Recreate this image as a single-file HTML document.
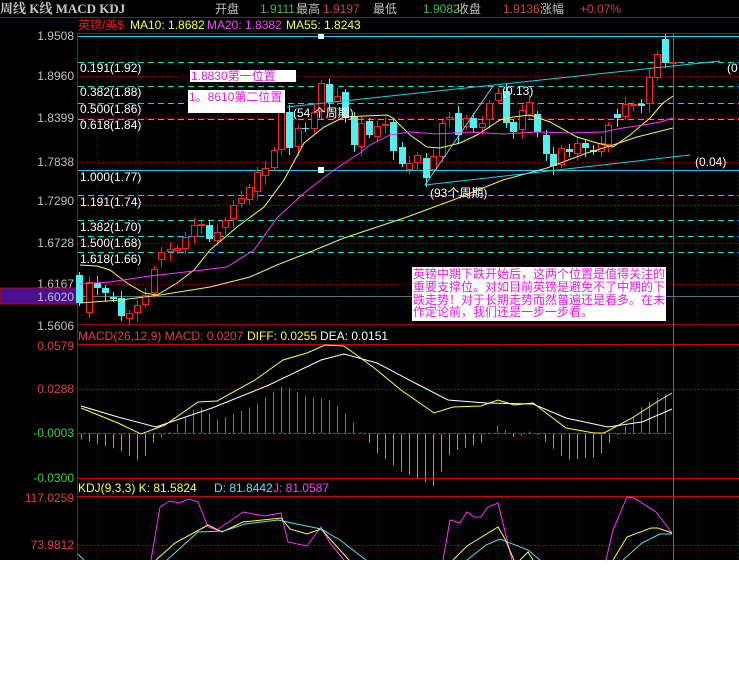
<!DOCTYPE html>
<html><head><meta charset="utf-8">
<style>
html,body{margin:0;padding:0;background:#fff;}
#w{position:relative;width:739px;height:684px;overflow:hidden;background:#fff;}
svg{position:absolute;left:0;top:0;}
text{font-family:"Liberation Sans","Noto Sans CJK SC",sans-serif;}
</style></head><body><div id="w">
<svg id="s" width="739" height="684" xmlns="http://www.w3.org/2000/svg">
<rect x="0" y="0" width="739" height="560" fill="#000"/>
<text x="0" y="13" font-size="13" font-weight="bold" fill="#c8c8c8" style="font-family:'Liberation Serif','Noto Serif CJK SC',serif">周线 K线 MACD KDJ</text>
<g font-size="12">
<text x="215" y="13" fill="#c0c0c0">开盘</text>
<text x="260" y="13" fill="#40c040">1.9111</text>
<text x="296" y="13" fill="#c0c0c0">最高</text>
<text x="323" y="13" fill="#d04040">1.9197</text>
<text x="373" y="13" fill="#c0c0c0">最低</text>
<text x="423" y="13" fill="#40c040">1.9082</text>
<text x="457" y="13" fill="#c0c0c0">收盘</text>
<text x="503" y="13" fill="#d04040">1.9136</text>
<text x="540" y="13" fill="#c0c0c0">涨幅</text>
<text x="580" y="13" fill="#d04040">+0.07%</text>
</g>
<line x1="0" y1="17.5" x2="739" y2="17.5" stroke="#b00000"/>
<g font-size="12">
<text x="78" y="29" fill="#e02020">英镑/美$</text>
<text x="130" y="29" fill="#ffff40">MA10: 1.8682</text>
<text x="207" y="29" fill="#ff40ff">MA20: 1.8382</text>
<text x="286" y="29" fill="#ffff40">MA55: 1.8243</text>
</g>
<line x1="77" y1="33.5" x2="739" y2="33.5" stroke="#d00000"/>
<line x1="77.5" y1="33" x2="77.5" y2="560" stroke="#c00000"/>
<g font-size="12" fill="#c0c0c0" text-anchor="end">
<text x="74" y="40">1.9508</text>
<text x="74" y="80">1.8960</text>
<text x="74" y="122">1.8399</text>
<text x="74" y="166">1.7838</text>
<text x="74" y="205">1.7290</text>
<text x="74" y="247">1.6728</text>
<text x="74" y="288">1.6167</text>
<text x="74" y="330">1.5606</text>
</g>
<rect x="0" y="288" width="77" height="16" fill="#4a1090" stroke="#c00000"/>
<text x="74" y="301" font-size="12" fill="#c0c0c0" text-anchor="end">1.6020</text>
<g id="grid" stroke="#a00000" stroke-dasharray="1,3"></g>
<g stroke="#20d0e0" stroke-width="1">
<line x1="78" y1="36.5" x2="739" y2="36.5"/>
<line x1="78" y1="170.5" x2="739" y2="170.5"/>
<g stroke-dasharray="6,4">
<line x1="78" y1="62.5" x2="739" y2="62.5"/>
<line x1="78" y1="86.5" x2="739" y2="86.5"/>
<line x1="78" y1="103.5" x2="739" y2="103.5"/>
<line x1="78" y1="119.5" x2="739" y2="119.5"/>
<line x1="78" y1="195.5" x2="739" y2="195.5"/>
<line x1="78" y1="220.5" x2="739" y2="220.5"/>
<line x1="78" y1="236.5" x2="739" y2="236.5"/>
<line x1="78" y1="252.5" x2="739" y2="252.5"/>
</g></g>
<line x1="78" y1="296.5" x2="739" y2="296.5" stroke="#507878"/>
<line x1="78" y1="324.5" x2="739" y2="324.5" stroke="#a00000"/>
<line x1="673.5" y1="34" x2="673.5" y2="560" stroke="#507878"/>
<g font-size="12" fill="#fff">
<text x="80" y="72">0.191(1.92)</text>
<text x="80" y="96">0.382(1.88)</text>
<text x="80" y="113">0.500(1.86)</text>
<text x="80" y="129">0.618(1.84)</text>
<text x="80" y="181">1.000(1.77)</text>
<text x="80" y="206">1.191(1.74)</text>
<text x="80" y="231">1.382(1.70)</text>
<text x="80" y="247">1.500(1.68)</text>
<text x="80" y="263">1.618(1.66)</text>
</g>
<g id="cand"></g>
<g fill="none" stroke-width="1">
<polyline stroke="#ffff40" points="80,265 97,266 110,270 127,283 144,293 157,295 177,283 194,270 210,250 237,227 264,207 284,180 304,143 324,127 344,117 364,116 387,115 393,118 410,135 427,147 440,148 460,143 477,135 500,120 513,117 530,115 550,122 577,137 597,143 613,147 630,135 650,118 663,103 673,96"/>
<polyline stroke="#ff30ff" points="80,284 110,282 150,276 194,271 227,267 254,250 277,218 304,193 334,170 360,153 370,145 390,135 410,132 437,134 470,132 503,134 537,132 570,133 603,132 623,128 643,125 660,122 673,118"/>
<polyline stroke="#f0f070" points="80,303 120,300 160,295 210,287 250,277 277,265 310,252 344,238 377,227 407,217 453,200 503,180 547,168 587,153 613,145 637,137 673,128"/>
<g stroke="#20d0e0">
<line x1="287" y1="107" x2="720" y2="61"/>
<line x1="425" y1="185" x2="690" y2="155"/>
<line x1="425" y1="185" x2="493" y2="86" stroke="#80c8e0"/>
</g></g>
<rect x="318" y="34" width="6" height="5" fill="#fff"/>
<rect x="318" y="167" width="6" height="6" fill="#fff"/>
<g font-size="12" fill="#fff">
<text x="502" y="95">(0.13)</text>
<text x="695" y="166">(0.04)</text>
<text x="727" y="72">(0</text>
<text x="293" y="117">(54 个周期)</text>
<text x="430" y="197">(93个周期)</text>
</g>
<rect x="190" y="70" width="106" height="12" fill="#fff"/>
<text x="191" y="80" font-size="12" fill="#e020e0">1.8830第一位置</text>
<rect x="188" y="90" width="97" height="23" fill="#fff"/>
<text x="189" y="101" font-size="12" fill="#e020e0">1。8610第二位置</text>
<rect x="412" y="267" width="254" height="54" fill="#fff"/>
<g font-size="12" fill="#e020e0">
<text x="413" y="278" textLength="252">英镑中期下跌开始后，这两个位置是值得关注的</text>
<text x="413" y="291" textLength="252">重要支撑位。对如目前英镑是避免不了中期的下</text>
<text x="413" y="304" textLength="252">跌走势！对于长期走势而然普遍还是看多。在未</text>
<text x="413" y="316">作定论前，我们还是一步一步看。</text>
</g>
<g font-size="12">
<text x="78" y="340" fill="#e04040">MACD(26,12,9) MACD: 0.0207</text>
<text x="247" y="340" fill="#ffff40">DIFF: 0.0255</text>
<text x="320" y="340" fill="#fff">DEA: 0.0151</text>
</g>
<line x1="77" y1="344.5" x2="739" y2="344.5" stroke="#d00000"/>
<g font-size="12" text-anchor="end">
<text x="74" y="350" fill="#e04040">0.0579</text>
<text x="74" y="393" fill="#e04040">0.0288</text>
<text x="74" y="437" fill="#40d040">-0.0003</text>
<text x="74" y="482" fill="#40d040">-0.0300</text>
</g>
<line x1="78" y1="389.5" x2="739" y2="389.5" stroke="#a00000" stroke-dasharray="1,3"/>
<g id="hist"></g>
<line x1="78" y1="433.5" x2="673" y2="433.5" stroke="#d02020" stroke-dasharray="3,2"/>
<polyline id="diff" fill="none" stroke="#ffff40" points="81,408 118,423 141,434 165,425 198,402 217,401 255,380 283,360 307,353 325,345 344,346 373,367 401,390 434,413 453,407 481,406 498,400 514,405 533,403 566,428 594,433 604,433 632,418 660,400 672,393"/>
<polyline id="dea" fill="none" stroke="#fff" points="81,406 118,417 156,427 212,408 269,385 321,360 344,354 377,363 415,383 448,400 486,403 533,404 566,418 608,427 642,422 672,409"/>
<line x1="77" y1="478.5" x2="739" y2="478.5" stroke="#d00000"/>
<g font-size="12">
<text x="78" y="492" fill="#ffff40">KDJ(9,3,3) K: 81.5824</text>
<text x="214" y="492" fill="#60e0f0">D: 81.8442</text>
<text x="273" y="492" fill="#ff40ff">J: 81.0587</text>
</g>
<line x1="77" y1="496.5" x2="739" y2="496.5" stroke="#d00000"/>
<g font-size="12" text-anchor="end" fill="#e04040">
<text x="74" y="502">117.0259</text>
<text x="74" y="549">73.9812</text>
</g>
<line x1="78" y1="545.5" x2="739" y2="545.5" stroke="#a00000" stroke-dasharray="1,3"/>
<g fill="none" stroke-width="1">
<polyline stroke="#ff30ff" points="151,560 160,507 170,501 179,503 189,499 198,502 208,527 217,530 243,512 264,516 281,513 288,542 307,546 321,527 330,543 344,560"/>
<polyline stroke="#ff30ff" points="443,560 450,520 460,523 467,512 474,517 481,517 488,507 498,503 512,560"/>
<polyline stroke="#ff30ff" points="606,560 613,530 627,497 634,498 656,512 672,533"/>
<polyline stroke="#ffff40" points="156,560 175,543 208,525 222,532 243,522 281,518 290,529 307,534 321,529 349,560"/>
<polyline stroke="#ffff40" points="453,560 467,546 498,527 505,539 514,560"/>
<polyline stroke="#ffff40" points="520,560 528,552 533,560"/>
<polyline stroke="#ffff40" points="613,560 627,537 651,528 658,528 672,533"/>
<polyline stroke="#60e0f0" points="167,560 198,532 224,531 245,524 278,520 292,523 321,529 340,540 366,560"/>
<polyline stroke="#60e0f0" points="467,560 486,545 500,539 528,550 540,560"/>
<polyline stroke="#60e0f0" points="623,560 642,543 660,534 672,534"/>
<polyline stroke="#60e0f0" points="78,554 84,560"/>
</g>
</svg>
</div>
<script>
var NS="http://www.w3.org/2000/svg";
function el(p,t,a){var e=document.createElementNS(NS,t);for(var k in a)e.setAttribute(k,a[k]);p.appendChild(e);return e;}
var g=document.getElementById('grid');
[76,118,162,205,243,284].forEach(function(y){el(g,'line',{x1:78,y1:y+.5,x2:739,y2:y+.5});});
for(var x=97;x<739;x+=40){el(g,'line',{x1:x+.5,y1:36,x2:x+.5,y2:324});el(g,'line',{x1:x+.5,y1:345,x2:x+.5,y2:478});el(g,'line',{x1:x+.5,y1:497,x2:x+.5,y2:560});}
var C=[[79,275,303,'c'],[89,282,313,'r'],[97,283,288,'c'],[105,288,293,'c'],[113,297,299,'c'],[121,298,316,'c'],[129,313,319,'r'],[137,305,313,'r'],[145,295,305,'r'],[154,269,293,'r'],[161,252,260,'r'],[170,249,252,'r'],[177,248,251,'r'],[185,237,249,'r'],[194,225,237,'r'],[201,224,225,'r'],[209,225,239,'c'],[217,232,241,'r'],[225,220,228,'r'],[233,205,219,'r'],[241,198,204,'r'],[249,187,200,'r'],[257,172,192,'r'],[265,168,176,'r'],[274,150,168,'r'],[281,112,150,'r'],[289,112,148,'c'],[298,128,147,'r'],[305,128,129,'c'],[314,112,129,'r'],[321,83,112,'r'],[329,84,102,'c'],[337,96,102,'r'],[345,92,118,'c'],[354,117,145,'c'],[361,123,147,'r'],[369,121,135,'c'],[377,126,137,'r'],[385,124,126,'r'],[393,122,151,'c'],[402,147,164,'c'],[409,163,170,'r'],[417,155,163,'r'],[426,158,178,'c'],[433,156,170,'r'],[442,123,157,'r'],[449,117,120,'r'],[458,113,135,'c'],[466,118,127,'r'],[473,118,128,'c'],[482,123,128,'r'],[489,103,120,'r'],[498,93,101,'r'],[506,91,123,'c'],[513,122,132,'c'],[522,110,130,'r'],[529,102,116,'r'],[537,114,132,'c'],[546,135,154,'c'],[553,154,166,'c'],[561,148,165,'r'],[569,149,152,'c'],[577,143,154,'r'],[585,143,148,'c'],[593,150,152,'c'],[601,143,152,'r'],[608,125,145,'r'],[617,114,118,'c'],[625,104,117,'r'],[633,104,106,'r'],[641,104,106,'c'],[649,77,104,'r'],[657,54,78,'r'],[665,39,63,'c'],[673,62,63,'r']];
var cg=document.getElementById('cand');
C.forEach(function(c,i){var x=c[0],t=c[1],b=c[2],col=c[3]=='c'?'#50f0f0':'#ff2020';
var wt=t-3-(i%3)*2,wb=b+3+(i%4)*2;
el(cg,'rect',{x:x,y:wt,width:1,height:wb-wt,fill:col});
if(c[3]=='c')el(cg,'rect',{x:x-3,y:t,width:7,height:Math.max(1,b-t),fill:col});
else el(cg,'rect',{x:x-2.5,y:t+.5,width:6,height:Math.max(1,b-t-1),fill:'#000',stroke:col});});
function pts(id){return document.getElementById(id).getAttribute('points').trim().split(/\s+/).map(function(p){return p.split(',').map(Number);});}
function interp(a,x){for(var i=1;i<a.length;i++){if(x<=a[i][0]){var f=(x-a[i-1][0])/(a[i][0]-a[i-1][0]);return a[i-1][1]+f*(a[i][1]-a[i-1][1]);}}return a[a.length-1][1];}
var D=pts('diff'),E=pts('dea'),h=document.getElementById('hist');
for(var x=81;x<=672;x+=8){var v=(interp(E,x)-interp(D,x))*2.6;
if(v>0)el(h,'rect',{x:x,y:433-v,width:1,height:v,fill:'#ff4040'});
else el(h,'rect',{x:x,y:434,width:1,height:-v,fill:'#30e030'});}
</script>
</body></html>
